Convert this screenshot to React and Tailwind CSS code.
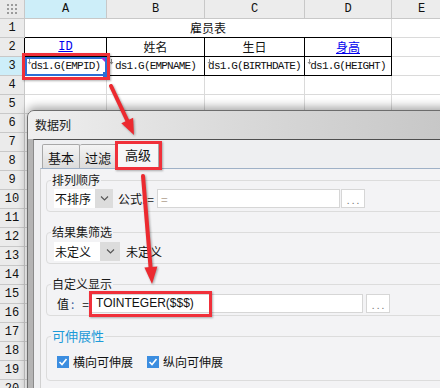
import React from 'react';

const mono = "font-['Liberation_Mono','Noto_Sans_CJK_SC',monospace]";
const gridCell = 'border-r border-b border-[#dadada] bg-white';

function Marker() {
  return (
    <svg className="absolute left-[2px] top-[2px]" width="5" height="6" viewBox="0 0 5 6">
      <path d="M2.5 0 V4" stroke="#8c8c8c" strokeWidth="1" />
      <path d="M0.5 3 L2.5 5.5 L4.5 3 Z" fill="#8c8c8c" />
    </svg>
  );
}

function CornerDots() {
  return (
    <svg width="12" height="12" viewBox="0 0 12 12">
      {[0, 4, 8].map((y) =>
        [0, 4, 8].map((x) => <rect key={`${x}-${y}`} x={x + 1} y={y + 1} width="2" height="2" fill="#9b9b9b" />)
      )}
    </svg>
  );
}

function RowHead({ n, active, table }) {
  return (
    <div
      className={`${mono} text-[12px] flex items-center justify-center border-b border-b-[#c8c8c8] border-r ${
        table ? 'border-r-black' : 'border-r-[#c8c8c8]'
      } ${active ? 'bg-[#cdeef9]' : 'bg-[#ebebeb]'}`}
    >
      {n}
    </div>
  );
}

function Sheet() {
  const empty = Array.from({ length: 17 }, (_, i) => i + 4);
  return (
    <div className="grid grid-cols-[25px_82px_98px_100px_87px_60px] auto-rows-[19px] w-[452px]">
      {/* column headers */}
      <div className="bg-[#e9e9e9] border-r border-b border-[#c8c8c8] flex items-center justify-center">
        <CornerDots />
      </div>
      {['A', 'B', 'C', 'D', 'E'].map((c) => (
        <div
          key={c}
          className={`${mono} text-[12px] flex items-center justify-center border-r border-b border-[#c8c8c8] ${
            c === 'A' ? 'bg-[#cdeef9]' : 'bg-[#ececec]'
          }`}
        >
          {c}
        </div>
      ))}

      {/* row 1 */}
      <RowHead n={1} />
      <div className="col-span-4 bg-white border-r border-r-[#dadada] border-b border-b-black flex items-center justify-center text-[12px]">
        雇员表
      </div>
      <div className={gridCell} />

      {/* row 2 */}
      <RowHead n={2} table />
      <div className="bg-white border-r border-b border-black flex items-center justify-center">
        <span className={`${mono} text-[12px] text-[#0000ee] underline`}>ID</span>
      </div>
      <div className="bg-white border-r border-b border-black flex items-center justify-center text-[12px]">姓名</div>
      <div className="bg-white border-r border-b border-black flex items-center justify-center text-[12px]">生日</div>
      <div className="bg-white border-r border-b border-black flex items-center justify-center">
        <span className="text-[12px] text-[#0000ee] underline">身高</span>
      </div>
      <div className={gridCell} />

      {/* row 3 */}
      <RowHead n={3} active table />
      <div className={`relative bg-white border-r border-b border-black flex items-center justify-center ${mono} text-[11px] tracking-[-0.8px]`}>
        <div className="absolute left-0 top-0 right-[-1px] bottom-[-1px] border-2 border-[#2b6fd6]" />
        <Marker />
        <svg className="absolute right-[1px] top-[1px]" width="4" height="4" viewBox="0 0 4 4">
          <path d="M0 0 H4 V4 Z" fill="#b020e0" />
        </svg>
        <div className="absolute right-[-2px] bottom-[-2px] w-[5px] h-[5px] bg-[#2b6fd6]" />
        ds1.G(EMPID)
      </div>
      <div className={`relative bg-white border-r border-b border-black flex items-center justify-center ${mono} text-[11px] tracking-[-0.8px]`}>
        <Marker />
        ds1.G(EMPNAME)
      </div>
      <div className={`relative bg-white border-r border-b border-black flex items-center justify-center ${mono} text-[11px] tracking-[-0.8px]`}>
        <Marker />
        ds1.G(BIRTHDATE)
      </div>
      <div className={`relative bg-white border-r border-b border-black flex items-center justify-center ${mono} text-[11px] tracking-[-0.8px]`}>
        <Marker />
        ds1.G(HEIGHT)
      </div>
      <div className={gridCell} />

      {/* empty rows */}
      {empty.map((n) => (
        <React.Fragment key={n}>
          <RowHead n={n} />
          <div className={gridCell} />
          <div className={gridCell} />
          <div className={gridCell} />
          <div className={gridCell} />
          <div className={gridCell} />
        </React.Fragment>
      ))}
    </div>
  );
}

function Chevron() {
  return (
    <svg width="9" height="5" viewBox="0 0 9 5">
      <path d="M1 0.5 L4.5 4 L8 0.5" fill="none" stroke="#555" strokeWidth="1.1" />
    </svg>
  );
}

function Select({ text, boxW, arrowW }) {
  return (
    <div className="flex h-[19px]">
      <div className={`${boxW} bg-white pl-[1px] text-[12px] leading-[19px]`}>{text}</div>
      <div className={`${arrowW} bg-[#dcdcdc] flex items-center justify-center`}>
        <Chevron />
      </div>
    </div>
  );
}

function Check() {
  return (
    <div className="w-[12px] h-[12px] bg-[#3b8de0] flex items-center justify-center">
      <svg width="10" height="10" viewBox="0 0 10 10">
        <path d="M1.5 5 L4 7.5 L8.5 2" fill="none" stroke="#fff" strokeWidth="1.6" />
      </svg>
    </div>
  );
}

function Dots() {
  return (
    <div className="w-[24px] h-[19px] bg-white border border-[#d6d6d6] flex items-end justify-center pb-[3px]">
      <span className="text-[10px] leading-[8px] text-[#777] tracking-[2px] pl-[2px]">...</span>
    </div>
  );
}

function Dialog() {
  return (
    <div className="absolute left-[27px] top-[110px] w-[430px] h-[300px] rounded-tl-[7px] border border-[#6d6d6d] bg-gradient-to-r from-[#b4b4b4] to-[#c2c2c2] shadow-[0_-3px_10px_rgba(0,0,0,0.35)] flex flex-col">
      <div className="h-[28px] shrink-0 rounded-tl-[6px] bg-gradient-to-r from-[#efefef] via-[#d9d9d9] to-[#c6c6c6] pl-[7px] flex items-center text-[12px] text-[#1a1a1a]">
        数据列
      </div>
      <div className="flex-1 ml-[5px] border-t border-l border-t-[#4f4f4f] border-l-[#8a8a8a] bg-[#eeeff1] flex flex-col">
        {/* tabs */}
        <div className="h-[28px] shrink-0 flex items-end pl-[8px]">
          <div className="w-[38px] h-[24px] border border-b-0 border-[#a8a8a8] rounded-t-[2px] bg-gradient-to-b from-[#f4f4f4] to-[#dcdcdc] flex items-center justify-center pt-[3px] text-[13px] leading-[16px]">
            基本
          </div>
          <div className="w-[37px] h-[24px] border border-b-0 border-l-0 border-[#a8a8a8] rounded-t-[2px] bg-gradient-to-b from-[#f4f4f4] to-[#dcdcdc] flex items-center justify-center pt-[3px] text-[13px] leading-[16px]">
            过滤
          </div>
          <div className="relative z-10 -mb-[1px] w-[42px] h-[28px] border-x border-[#a8a8a8] border-t-2 border-t-[#4a96e0] rounded-t-[2px] bg-[#f6f6f7] flex items-center justify-center pb-[2px] text-[13px] leading-[16px]">
            高级
          </div>
        </div>
        {/* panel */}
        <div className="flex-1 ml-[6px] border-t border-l border-t-[#9fb1c7] border-l-[#d0d0d0] bg-[#f3f3f5] pt-[3px] pl-[5px] flex flex-col">
          <fieldset className="w-[410px] border border-[#dcdcdc] rounded-[4px]">
            <legend className="ml-[4px] px-[1px] text-[12px] leading-[16px] text-[#1a1a1a]">排列顺序</legend>
            <div className="flex items-center pl-[7px] pt-[1px] pb-[3px] text-[12px]">
              <Select text="不排序" boxW="w-[41px]" arrowW="w-[18px]" />
              <span className="ml-[5px] leading-[19px]">公式</span>
              <span className="leading-[19px] text-[#3a5a9a]">:</span>
              <span className="ml-[2px] leading-[19px] text-[#222]">=</span>
              <div className="ml-[3px] w-[183px] h-[19px] bg-white border border-[#d6d6d6] pl-[3px] text-[12px] leading-[17px] text-[#b0a090]">
                =
              </div>
              <div className="ml-[1px]">
                <Dots />
              </div>
            </div>
          </fieldset>

          <fieldset className="mt-[12px] w-[410px] border border-[#dcdcdc] rounded-[4px]">
            <legend className="ml-[4px] px-[1px] text-[12px] leading-[16px] text-[#1a1a1a]">结果集筛选</legend>
            <div className="flex items-center pl-[7px] pt-[2px] pb-[2px] text-[12px]">
              <Select text="未定义" boxW="w-[46px]" arrowW="w-[20px]" />
              <span className="ml-[6px] leading-[19px]">未定义</span>
            </div>
          </fieldset>

          <fieldset className="mt-[12px] w-[410px] border border-[#dcdcdc] rounded-[4px]">
            <legend className="ml-[4px] px-[1px] text-[12px] leading-[16px] text-[#1a1a1a]">自定义显示</legend>
            <div className="flex items-center pl-[10px] pt-[2px] pb-[2px] text-[12px]">
              <span className="leading-[19px]">值</span>
              <span className="ml-[2px] leading-[19px] text-[#3a5a9a]">:</span>
              <span className="ml-[8px] leading-[19px]">=</span>
              <div className="ml-[2px] w-[272px] h-[19px] bg-white border border-[#d6d6d6] pl-[4px] font-['Liberation_Sans',sans-serif] text-[12px] leading-[17px] text-[#111]">
                TOINTEGER($$$)
              </div>
              <div className="ml-[3px]">
                <Dots />
              </div>
            </div>
          </fieldset>

          <fieldset className="mt-[12px] w-[410px] border border-[#dcdcdc] rounded-[4px]">
            <legend className="ml-[4px] px-[1px] text-[13px] leading-[16px] text-[#1c9ad8]">可伸展性</legend>
            <div className="flex items-center pl-[10px] pt-[11px] pb-[11px] text-[12px]">
              <Check />
              <span className="ml-[4px] leading-[14px]">横向可伸展</span>
              <div className="ml-[14px]">
                <Check />
              </div>
              <span className="ml-[4px] leading-[14px]">纵向可伸展</span>
            </div>
          </fieldset>
        </div>
      </div>
    </div>
  );
}

function Annotations() {
  return (
    <>
      <div className="absolute left-[22px] top-[53px] w-[88px] h-[27px] border-[3px] border-[#f0303a] shadow-[1px_1px_2px_rgba(0,0,0,0.3)]" />
      <div className="absolute left-[115px] top-[141px] w-[47px] h-[29px] border-[3px] border-[#f0303a] shadow-[1px_1px_2px_rgba(0,0,0,0.3)] z-20" />
      <div className="absolute left-[89px] top-[291px] w-[123px] h-[26px] border-[3px] border-[#f0303a] shadow-[1px_1px_2px_rgba(0,0,0,0.3)]" />
      <svg
        className="absolute left-0 top-0 z-30 pointer-events-none drop-shadow-[1px_1px_1px_rgba(0,0,0,0.35)]"
        width="440"
        height="388"
        viewBox="0 0 440 388"
      >
        <line x1="111" y1="86" x2="127.5" y2="121" stroke="#ec2a30" strokeWidth="4" strokeLinecap="round" />
        <polygon points="134,135 121.3,123.3 133.1,117.7" fill="#ec2a30" />
        <line x1="143" y1="176" x2="150.6" y2="268" stroke="#ec2a30" strokeWidth="4" strokeLinecap="round" />
        <polygon points="152,284 144.4,267.6 157.4,266.5" fill="#ec2a30" />
      </svg>
    </>
  );
}

export default function App() {
  return (
    <div className="relative w-[440px] h-[388px] overflow-hidden bg-white font-['Noto_Sans_CJK_SC',sans-serif] text-[12px] text-[#111]">
      <Sheet />
      <Dialog />
      <Annotations />
    </div>
  );
}
